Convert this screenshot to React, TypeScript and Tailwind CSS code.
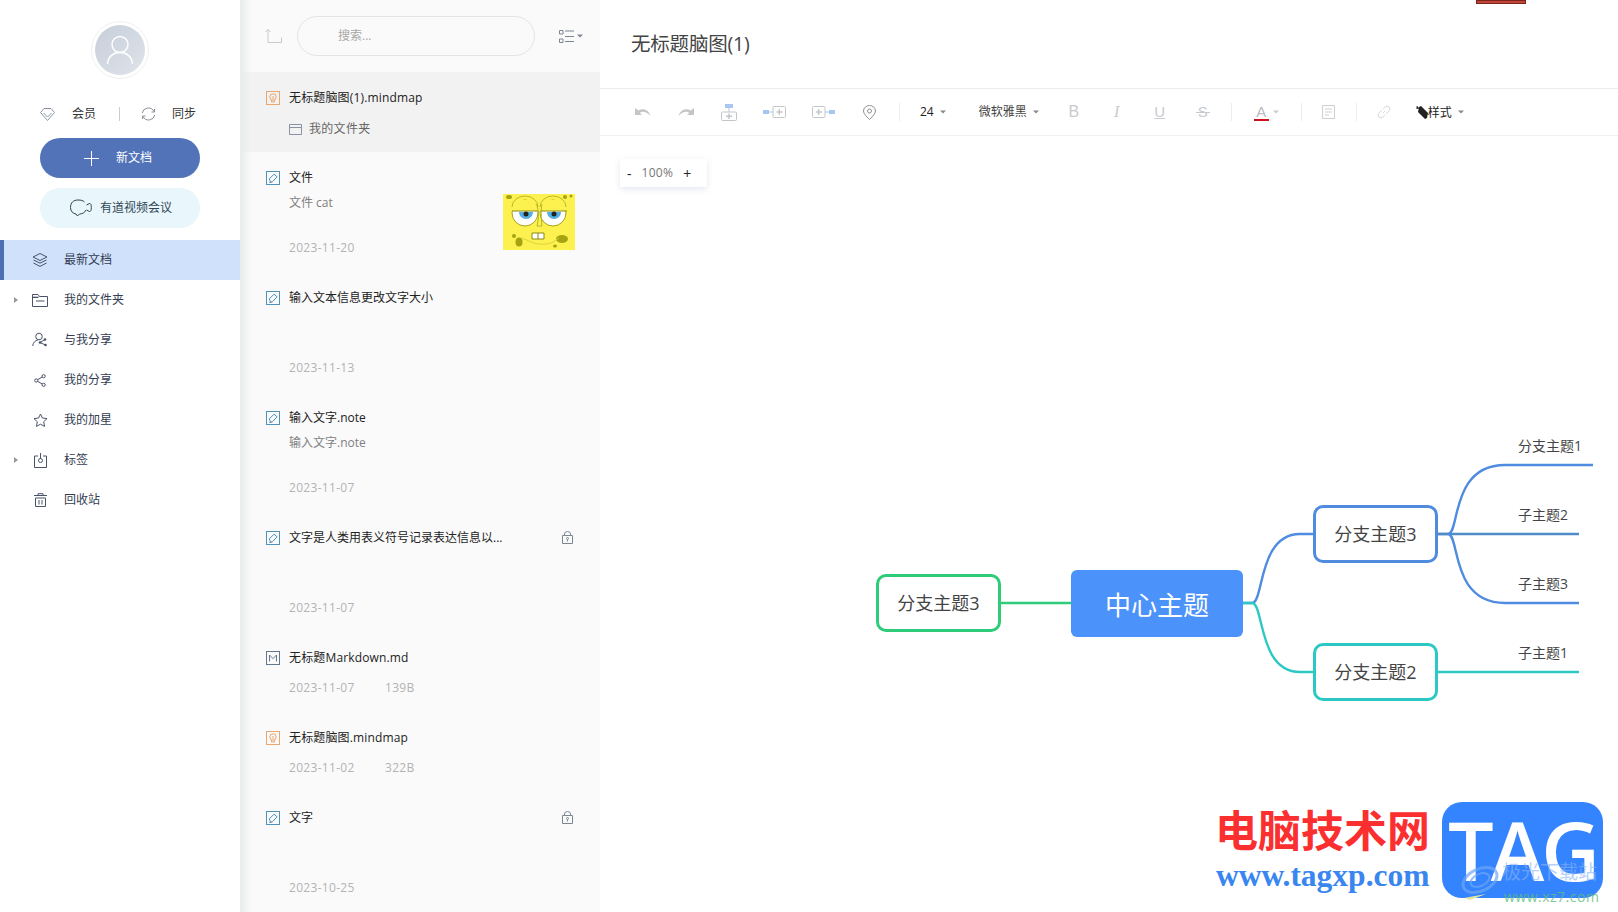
import React from "react";

const Svg = ({ w, h, vb, children, className = "" }: { w: number; h: number; vb?: string; children: React.ReactNode; className?: string }) => (
  <svg width={w} height={h} viewBox={vb ?? `0 0 ${w} ${h}`} fill="none" className={`shrink-0 ${className}`}>{children}</svg>
);

const NavColor = "#4a5368";

const Layers = () => (
  <Svg w={16} h={16}>
    <path d="M8 1.5 15 5 8 8.5 1 5Z" stroke={NavColor} />
    <path d="M1.5 8 8 11.2 14.5 8" stroke={NavColor} />
    <path d="M1.5 11 8 14.4 14.5 11" stroke={NavColor} />
  </Svg>
);
const FolderNav = () => (
  <Svg w={16} h={13}>
    <path d="M.5 12.5V.5h5.5l1.5 2h8v10Z" stroke={NavColor} />
    <path d="M.5 3.5h6M4 7h8.5" stroke={NavColor} />
    <path d="M.5 2.5h15" stroke={NavColor} opacity=".3" />
  </Svg>
);
const People = () => (
  <Svg w={16} h={16}>
    <circle cx="7" cy="4.5" r="3.3" stroke={NavColor} />
    <path d="M.7 14c.4-3.6 2.6-5.6 5.2-6" stroke={NavColor} />
    <circle cx="8" cy="10.5" r="1.3" fill={NavColor} />
    <circle cx="13" cy="7.5" r="1.3" fill={NavColor} />
    <circle cx="13.5" cy="13" r="1.3" fill={NavColor} />
    <path d="M8 10.5 13 7.5M8 10.5l5.5 2.5" stroke={NavColor} />
  </Svg>
);
const ShareIcon = () => (
  <Svg w={12} h={13}>
    <circle cx="2.2" cy="6.5" r="1.6" stroke={NavColor} />
    <circle cx="9.6" cy="2.2" r="1.6" stroke={NavColor} />
    <circle cx="9.6" cy="10.8" r="1.6" stroke={NavColor} />
    <path d="M3.6 5.7 8.2 3M3.6 7.3 8.2 10" stroke={NavColor} />
  </Svg>
);
const Star = () => (
  <Svg w={15} h={14}>
    <path d="M7.5 1 9.4 5l4.6.6-3.3 3.2.8 4.6-4-2.2-4 2.2.8-4.6L1 5.6 5.6 5Z" stroke={NavColor} />
  </Svg>
);
const TagIcon = () => (
  <Svg w={13} h={15}>
    <path d="M4 3H.5v11.5h12V3H9" stroke={NavColor} />
    <path d="M6.5 0v5.5" stroke={NavColor} />
    <circle cx="6.5" cy="7.5" r="2" stroke={NavColor} />
  </Svg>
);
const Trash = () => (
  <Svg w={13} h={14}>
    <path d="M0 2.5h13M4 2.5V.7h5v1.8" stroke={NavColor} />
    <path d="M1.5 5h10v8.5h-10Z" stroke={NavColor} />
    <path d="M5 7v4.5M8 7v4.5" stroke={NavColor} />
  </Svg>
);

const NoteIcon = () => (
  <Svg w={14} h={14}>
    <rect x=".5" y=".5" width="13" height="13" stroke="#4f94b8" />
    <path d="M3.2 8 8 3.2l3 2.600-4.600 5H4.300Z" stroke="#4f94b8" />
    <path d="M3.500 11.500h2" stroke="#4f94b8" />
  </Svg>
);
const MindIcon = () => (
  <Svg w={14} h={14}>
    <rect x=".5" y=".5" width="13" height="13" stroke="#eba76e" />
    <circle cx="7" cy="6" r="3.2" stroke="#eba76e" />
    <path d="M5.6 9v2h2.8V9M7 5v3" stroke="#eba76e" />
  </Svg>
);
const MdIcon = () => (
  <Svg w={14} h={14}>
    <rect x=".5" y=".5" width="13" height="13" stroke="#66798c" />
    <path d="M3.5 10.5V4l3.5 3.6L10.5 4v6.5" stroke="#66798c" />
  </Svg>
);
const Lock = () => (
  <Svg w={11} h={13}>
    <path d="M.5 4.5h10v8H.5Z" stroke="#7c8794" />
    <path d="M2.5 4.5V3a3 2.5 0 0 1 6 0v1.5" stroke="#7c8794" />
    <circle cx="5.5" cy="7.5" r="1" stroke="#7c8794" />
    <path d="M5.5 8.5v2" stroke="#7c8794" />
  </Svg>
);

const Caret = ({ c = "#888" }: { c?: string }) => (
  <Svg w={6} h={4}><path d="M0 .5h6L3 3.5Z" fill={c} /></Svg>
);

const SpongeBob = () => (
  <Svg w={72} h={56}>
    <rect width="72" height="56" fill="#fdf14f" />
    <g fill="#a6a312">
      <ellipse cx="6" cy="3" rx="3" ry="2" /><ellipse cx="62" cy="3" rx="2" ry="2" /><ellipse cx="16" cy="48" rx="3.5" ry="4.5" />
      <ellipse cx="11" cy="42" rx="2" ry="2" /><ellipse cx="59" cy="45" rx="6" ry="4" /><ellipse cx="52" cy="52" rx="2" ry="1.5" />
      <ellipse cx="68" cy="2" rx="1.5" ry="1.5" />
    </g>
    <circle cx="22" cy="19" r="13" fill="#fff" stroke="#a6a312" />
    <circle cx="50" cy="19" r="13" fill="#fff" stroke="#a6a312" />
    <rect x="8" y="6" width="57" height="11" fill="#fdf14f" />
    <path d="M9 17h26M37 17h27" stroke="#8c8a12" strokeWidth="1" />
    <path d="M9 13a13 11 0 0 1 26 0M37 13a13 11 0 0 1 26 0" stroke="#bdb92a" strokeWidth="1" />
    <path d="M16 18a7 7 0 0 0 14 0Z" fill="#55aee0" />
    <path d="M44 18a7 7 0 0 0 14 0Z" fill="#55aee0" />
    <circle cx="23" cy="20" r="2.5" fill="#222" />
    <circle cx="51" cy="20" r="2.5" fill="#222" />
    <path d="M33 10c3 4 3 14 1 22h5c-1-8-1-18 0-22" stroke="#b9b52a" />
    <path d="M29 45h12v-6H29Z" fill="#fff" stroke="#8c8a12" />
    <path d="M35 39v6" stroke="#8c8a12" />
    <path d="M18 44c8 2 12 7 24 6 6 0 10-3 14-6" stroke="#d9d43e" />
  </Svg>
);

type Item = { icon: React.ReactNode; title: string; sub?: React.ReactNode; date?: string; size?: string; h: 80 | 120; active?: boolean; lock?: boolean; thumb?: boolean; latin?: boolean };

const items: Item[] = [
  { icon: <MindIcon />, title: "无标题脑图(1).mindmap", h: 80, active: true, latin: true, sub: (
    <span className="mt-[2px] flex items-center gap-[7px] text-[#666]">
      <Svg w={13} h={11}><path d="M.5.5h12v10H.5ZM.5 3.5h12" stroke="#8a93a6" /></Svg>我的文件夹
    </span>
  ) },
  { icon: <NoteIcon />, title: "文件", sub: "文件 cat", date: "2023-11-20", h: 120, thumb: true },
  { icon: <NoteIcon />, title: "输入文本信息更改文字大小", date: "2023-11-13", h: 120 },
  { icon: <NoteIcon />, title: "输入文字.note", sub: "输入文字.note", date: "2023-11-07", h: 120 },
  { icon: <NoteIcon />, title: "文字是人类用表义符号记录表达信息以...", date: "2023-11-07", h: 120, lock: true },
  { icon: <MdIcon />, title: "无标题Markdown.md", date: "2023-11-07", size: "139B", h: 80, latin: true },
  { icon: <MindIcon />, title: "无标题脑图.mindmap", date: "2023-11-02", size: "322B", h: 80, latin: true },
  { icon: <NoteIcon />, title: "文字", date: "2023-10-25", h: 120, lock: true },
];

const DocRow = ({ it }: { it: Item }) => (
  <div className={`relative shrink-0 pl-[26px] pr-[27px] pt-[16px] ${it.h === 80 ? "h-[80px]" : "h-[120px]"} ${it.active ? "bg-[#f2f2f2]" : ""}`}>
    <div className="flex h-[20px] items-center">
      {it.icon}
      <span className={`ml-[9px] text-[12px] text-[#222] ${it.latin ? "tracking-[0.15px]" : ""}`}>{it.title}</span>
      {it.lock && <span className="-mt-[2px] ml-auto"><Lock /></span>}
    </div>
    {it.h === 120 ? (
      <>
        <div className="mt-[5px] ml-[23px] flex h-[20px] items-center text-[12px] text-[#808080]">{it.sub}</div>
        <div className="mt-[25px] ml-[23px] flex h-[20px] items-center text-[12px] tracking-[0.3px] text-[#b3b3b3]">{it.date}</div>
      </>
    ) : (
      <div className="mt-[10px] ml-[23px] flex h-[20px] items-center text-[12px] tracking-[0.3px] text-[#b3b3b3]">
        {it.sub}
        {it.date && <span className="w-[96px]">{it.date}</span>}
        {it.size && <span>{it.size}</span>}
      </div>
    )}
    {it.thumb && <div className="absolute right-[25px] top-[42px]"><SpongeBob /></div>}
  </div>
);

const nav: { icon: React.ReactNode; label: string; active?: boolean; caret?: boolean }[] = [
  { icon: <Layers />, label: "最新文档", active: true },
  { icon: <FolderNav />, label: "我的文件夹", caret: true },
  { icon: <People />, label: "与我分享" },
  { icon: <ShareIcon />, label: "我的分享" },
  { icon: <Star />, label: "我的加星" },
  { icon: <TagIcon />, label: "标签", caret: true },
  { icon: <Trash />, label: "回收站" },
];

const Sidebar = () => (
  <aside className="flex w-[240px] shrink-0 flex-col bg-white">
    <div className="mt-[21px] flex justify-center">
      <div className="flex h-[58px] w-[58px] items-center justify-center rounded-full border border-[#eef0f2]">
        <div className="flex h-[50px] w-[50px] items-center justify-center rounded-full bg-gradient-to-br from-[#c7ced9] to-[#dfe4ea]">
          <Svg w={28} h={30}>
            <circle cx="14" cy="9.5" r="8" stroke="#fff" strokeWidth="1.4" />
            <path d="M1.5 29c.5-7 5.5-11.500 12.500-11.500S26 22 26.500 29" stroke="#fff" strokeWidth="1.4" />
          </Svg>
        </div>
      </div>
    </div>
    <div className="mt-[24px] flex h-[22px] items-center pl-[40px] text-[12px] text-[#333]">
      <Svg w={15} h={13}>
        <path d="M4 .5h7L14.500 4.500 7.500 12.500.5 4.500Z" stroke="#8a93a6" />
        <path d="M3.500 5l4 4 4-4" stroke="#8a93a6" />
      </Svg>
      <span className="ml-[17px]">会员</span>
      <span className="ml-[23px] h-[14px] w-px bg-[#ccc]" />
      <span className="ml-[21px] flex">
        <Svg w={15} h={14}>
          <path d="M1.200 6A6.300 6.300 0 0 1 13 4.500M13.800 8A6.300 6.300 0 0 1 2 9.500" stroke="#8a8f98" />
          <path d="M13.500 2v3h-3M1.500 12V9h3" stroke="#8a8f98" />
        </Svg>
      </span>
      <span className="ml-[16px]">同步</span>
    </div>
    <div className="mt-[13px] ml-[40px] flex h-[40px] w-[160px] items-center self-start rounded-full bg-[#5273b8] pl-[44px] text-[12px] text-white">
      <Svg w={15} h={15}><path d="M7.500 0v15M0 7.500h15" stroke="#fff" /></Svg>
      <span className="ml-[17px]">新文档</span>
    </div>
    <div className="ml-[40px] mt-[10px] flex h-[40px] w-[160px] items-center rounded-full bg-[#e9f6fc] pl-[30px] text-[12px] text-[#2f4654]">
      <Svg w={22} h={18}>
        <path d="M14.500 3C13 1.500 11 1 8 1 3.500 1 .5 3.500.5 8.500c0 4 2.500 6 5.500 6.500l1.500 2 2-2c3 0 5.500-1.500 6.500-4" stroke="#2f4654" />
        <path d="M16.500 6l3-1.500c1.200 0 1.800.8 1.800 4s-.6 4-1.800 4l-3-1.500" stroke="#2f4654" />
      </Svg>
      <span className="ml-[8px]">有道视频会议</span>
    </div>
    <nav className="mt-[12px] flex flex-col">
      {nav.map((n) => (
        <div key={n.label} className={`relative flex h-[40px] items-center text-[12px] text-[#333c52] ${n.active ? "border-l-4 border-[#4f6fb5] bg-[#d0e1fb]" : ""}`}>
          {n.caret && (
            <Svg w={4} h={6} className="absolute left-[14px] top-[17px]"><path d="M0 0l4 3-4 3Z" fill="#999" /></Svg>
          )}
          <span className={`flex w-[16px] justify-center ${n.active ? "ml-[28px]" : "ml-[32px]"}`}>{n.icon}</span>
          <span className="ml-[16px]">{n.label}</span>
        </div>
      ))}
    </nav>
  </aside>
);

const ListPanel = () => (
  <section className="relative flex w-[360px] shrink-0 flex-col overflow-hidden bg-[#fafafa]">
    <div className="flex h-[72px] shrink-0 items-center pl-[25px]">
      <Svg w={17} h={14} className="-mt-[1px]">
        <path d="M.5 3 3 .5 5.500 3M3 .5V13.500H16.500V8.500" stroke="#c6cad0" />
      </Svg>
      <div className="ml-[15px] flex h-[40px] w-[238px] items-center rounded-full border border-[#e4e4e4] pl-[40px] text-[12px] text-[#a8a8a8]">搜索...</div>
      <Svg w={24} h={13} className="ml-[24px]">
        <path d="M.5.500h3.500v3.500H.5ZM.5 9h3.500v3.500H.5ZM6 1h9M6 6.500h9M6 11.500h9" stroke="#7d8593" />
        <path d="M18 4.500h6l-3 3Z" fill="#7d8593" />
      </Svg>
    </div>
    {items.map((it) => <DocRow key={it.title} it={it} />)}
    <div className="pointer-events-none absolute inset-y-0 left-0 w-[12px] bg-gradient-to-r from-[#e9ecec] to-transparent" />
  </section>
);

const Divider = ({ ml }: { ml: string }) => <span className={`h-[18px] w-px bg-[#ededed] ${ml}`} />;
const G = "#c2c5ca";
const B = "#a9c6f3";

const Toolbar = () => (
  <div className="flex h-[47px] shrink-0 items-center border-b border-[#efefef] pl-[35px]">
    <Svg w={16} h={10}><path d="M0 1v7h7L4.800 6C7 4 11 4 15.500 9 14 3.500 8.500.500 3.500 3.500Z" fill={G} /></Svg>
    <Svg w={16} h={10} className="ml-[27px]"><path d="M16 1v7H9l2.200-2C9 4 5 4 .5 9 2 3.500 7.500.500 12.500 3.500Z" fill={G} /></Svg>
    <Svg w={16} h={17} className="ml-[27px]">
      <rect x="4" y="0" width="8" height="4" fill={B} />
      <path d="M8 4v4" stroke={G} />
      <rect x=".5" y="8" width="15" height="8.500" rx="1" stroke={G} />
      <path d="M8 9.500v5.500M5 12.300h6" stroke={G} strokeWidth="1.500" />
    </Svg>
    <Svg w={23} h={12} className="ml-[26px]">
      <rect x="0" y="4" width="6" height="4" fill={B} />
      <path d="M6 6h4" stroke={B} />
      <rect x="10" y=".5" width="12.500" height="11" rx="1" stroke={G} />
      <path d="M16.300 3v6M13.500 6h6" stroke={G} strokeWidth="1.500" />
    </Svg>
    <Svg w={23} h={12} className="ml-[26px]">
      <rect x="17" y="4" width="6" height="4" fill={B} />
      <path d="M13 6h4" stroke={B} />
      <rect x=".5" y=".5" width="12.500" height="11" rx="1" stroke={G} />
      <path d="M6.700 3v6M4 6h6" stroke={G} strokeWidth="1.500" />
    </Svg>
    <Svg w={13} h={15} className="ml-[28px]">
      <path d="M6.500 14.500C3 11 .5 8.500.5 6a6 5.500 0 0 1 12 0c0 2.500-2.500 5-6 8.500Z" stroke="#8d9094" />
      <circle cx="6.500" cy="6" r="2" stroke="#8d9094" />
    </Svg>
    <Divider ml="ml-[23px]" />
    <span className="ml-[20px] text-[12px] text-[#222]">24</span>
    <span className="ml-[6px]"><Caret /></span>
    <span className="ml-[33px] -mt-[1px] text-[12px] text-[#444]">微软雅黑</span>
    <span className="ml-[6px]"><Caret /></span>
    <span className="ml-[29px] w-[12px] text-center font-['Liberation_Sans',sans-serif] text-[16px] font-normal text-[#c8cacd]">B</span>
    <span className="ml-[31px] w-[12px] text-center font-['Liberation_Serif',serif] text-[16px] italic text-[#c8cacd]">I</span>
    <span className="ml-[31px] w-[12px] text-center font-['Liberation_Sans',sans-serif] text-[15px] text-[#c8cacd] underline">U</span>
    <span className="relative ml-[31px] w-[12px] text-center font-['Liberation_Sans',sans-serif] text-[15px] text-[#c8cacd]">
      S
      <span className="absolute left-[-1px] top-[11px] h-px w-[14px] bg-[#c8cacd]" />
    </span>
    <Divider ml="ml-[22px]" />
    <span className="ml-[22px] flex flex-col items-center">
      <span className="font-['Liberation_Sans',sans-serif] text-[15px] leading-[15px] text-[#b8bbc0]">A</span>
      <span className="h-[2px] w-[15px] bg-[#d0101a]" />
    </span>
    <span className="ml-[4px]"><Caret c="#c8cacd" /></span>
    <Divider ml="ml-[22px]" />
    <Svg w={13} h={14} className="ml-[20px]">
      <path d="M.5.500h12v13H.5ZM3 4h7M3 7h7M3 10h4" stroke="#cdd0d3" />
    </Svg>
    <Divider ml="ml-[21px]" />
    <Svg w={14} h={14} className="ml-[20px]">
      <path d="M6 8 8 6M5 5 2 8a2.500 2.500 0 0 0 4 4l2-2M9 9l3-3a2.500 2.500 0 0 0-4-4L6 4" stroke="#d6d8da" />
    </Svg>
    <Svg w={13} h={13} className="ml-[25px]">
      <path d="M3 1l2-1 7 7-1 5-2 1L2 6Z" fill="#222" />
      <path d="M0 2h3M1 0l1 3" stroke="#222" />
    </Svg>
    <span className="ml-[-1px] mt-[1px] text-[12px] text-[#222]">样式</span>
    <span className="ml-[6px]"><Caret /></span>
  </div>
);

const MindMap = () => (
  <>
    <svg className="absolute left-0 top-0" width="1618" height="912" fill="none">
      <path d="M1001 603H1071" stroke="#2ecb78" strokeWidth="2.400" />
      <path d="M1243 603H1252C1264 603 1258 534 1300 534H1313" stroke="#4f8ce0" strokeWidth="2.400" />
      <path d="M1243 603H1252C1264 603 1258 672 1300 672H1313" stroke="#2cc9c4" strokeWidth="2.400" />
      <path d="M1438 534H1448C1460 534 1450 465 1505 465H1593" stroke="#4f8ce0" strokeWidth="2.400" />
      <path d="M1438 534H1579" stroke="#4f8cc8" strokeWidth="2.400" />
      <path d="M1448 534C1460 534 1450 603 1505 603H1579" stroke="#4f8ce0" strokeWidth="2.400" />
      <path d="M1438 672H1579" stroke="#2cc9c4" strokeWidth="2.400" />
    </svg>
    <Node x={876} y={574} color="border-[#2ecb78]">分支主题3</Node>
    <Node x={1313} y={505} color="border-[#4f8ce0]">分支主题3</Node>
    <Node x={1313} y={643} color="border-[#2cc9c4]">分支主题2</Node>
    <div className="absolute left-[1071px] top-[570px] flex h-[67px] w-[172px] items-center justify-center rounded-[6px] bg-[#4c92fb] pt-[3px] text-[26px] text-white">中心主题</div>
    <Leaf x={1518} y={436}>分支主题1</Leaf>
    <Leaf x={1518} y={505}>子主题2</Leaf>
    <Leaf x={1518} y={574}>子主题3</Leaf>
    <Leaf x={1518} y={643}>子主题1</Leaf>
  </>
);

const Node = ({ x, y, color, children }: { x: number; y: number; color: string; children: React.ReactNode }) => (
  <div style={{ left: x, top: y }} className={`absolute flex h-[58px] w-[125px] items-center justify-center rounded-[10px] border-[3px] bg-white pt-[1px] text-[18px] text-[#444] ${color}`}>{children}</div>
);
const Leaf = ({ x, y, children }: { x: number; y: number; children: React.ReactNode }) => (
  <div style={{ left: x, top: y }} className="absolute h-[20px] text-[14px] leading-[20px] text-[#444]">{children}</div>
);

const Watermark = () => (
  <>
    <div className="absolute left-[1215px] top-[799px] font-['Noto_Sans_CJK_SC',sans-serif] text-[43px] font-bold leading-[58px] text-[#fb2f2f]">电脑技术网</div>
    <div className="absolute left-[1216px] top-[858px] font-['Liberation_Serif',serif] text-[31.500px] font-bold leading-[36px] text-[#3a86f0]">www.tagxp.com</div>
    <div className="absolute left-[1442px] top-[802px] flex h-[96px] w-[161px] items-center justify-center rounded-[20px] bg-[#3584ff] font-['Open_Sans',sans-serif] text-[81px] font-semibold leading-[58px] tracking-[-3px] text-white">TAG</div>
    <svg className="absolute left-[1460px] top-[862px]" width="42" height="40" fill="none">
      <ellipse cx="20" cy="18" rx="18" ry="11" stroke="#6ea6f5" strokeWidth="3" transform="rotate(-25 20 18)" opacity=".7" />
      <ellipse cx="20" cy="18" rx="10" ry="6" stroke="#6ea6f5" strokeWidth="2" transform="rotate(-25 20 18)" opacity=".7" />
      <path d="M4 36 26 32 10 38Z" fill="#e7e6a0" />
    </svg>
    <div className="absolute left-[1502px] top-[860px] text-[19px] leading-[24px] text-[#8ab4f8] opacity-60">极光下载站</div>
    <div className="absolute left-[1504px] top-[888px] text-[14px] leading-[18px] tracking-[0.5px] text-[#5fbd7c] opacity-80">www.xz7.com</div>
  </>
);

export default function App() {
  return (
    <div className="relative flex h-[912px] w-[1618px] overflow-hidden bg-white font-['Open_Sans','Noto_Sans_CJK_SC',sans-serif]">
      <Sidebar />
      <ListPanel />
      <main className="flex min-w-0 flex-1 flex-col">
        <div className="flex h-[88px] shrink-0 items-center pl-[31px] text-[19.500px] tracking-[-0.2px] text-[#444]">无标题脑图(1)</div>
        <div className="h-[1px] shrink-0 bg-[#ececec]" />
        <Toolbar />
        <div className="ml-[20px] mt-[23px] flex h-[28px] w-[87px] items-center bg-white pl-[7px] text-[12px] text-[#777] shadow-[0_2px_6px_rgba(90,120,170,0.18)]">
          <span className="text-[14px] text-[#222]">-</span>
          <span className="ml-[10px] tracking-[0.3px]">100%</span>
          <span className="ml-[10px] text-[14px] text-[#222]">+</span>
        </div>
      </main>
      <div className="absolute left-[1476px] top-0 h-[4px] w-[50px] border border-[#7a241c] bg-[#c5443a]" />
      <MindMap />
      <Watermark />
    </div>
  );
}
